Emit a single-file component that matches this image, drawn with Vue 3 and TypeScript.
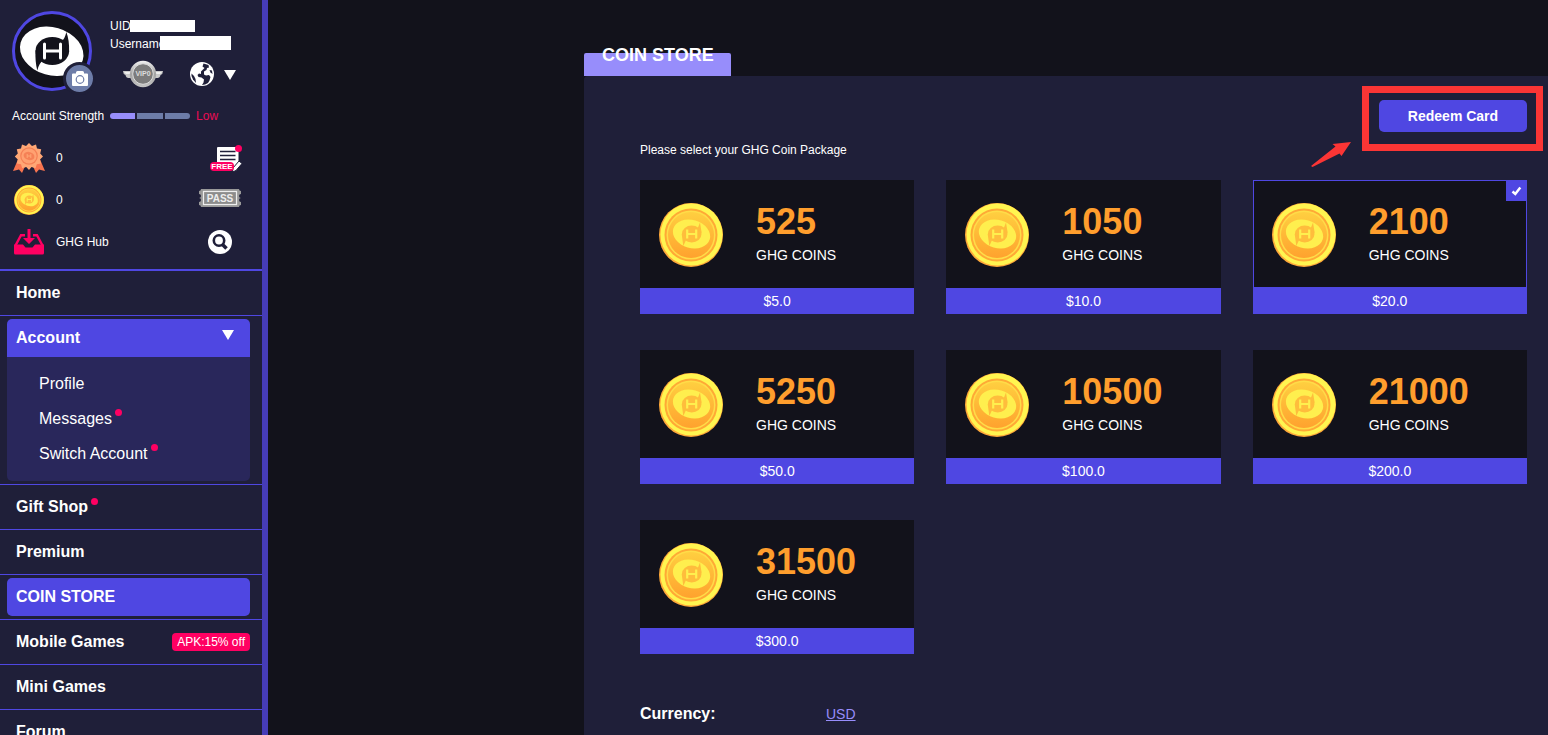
<script setup lang="ts">
import { ref } from 'vue'

interface Pack {
  coins: number
  price: string
}

interface NavItem {
  label: string
  dot?: boolean
  tag?: string
  children?: { label: string; dot?: boolean }[]
}

const packs: Pack[] = [
  { coins: 525, price: '$5.0' },
  { coins: 1050, price: '$10.0' },
  { coins: 2100, price: '$20.0' },
  { coins: 5250, price: '$50.0' },
  { coins: 10500, price: '$100.0' },
  { coins: 21000, price: '$200.0' },
  { coins: 31500, price: '$300.0' },
]

const nav: NavItem[] = [
  { label: 'Home' },
  {
    label: 'Account',
    children: [
      { label: 'Profile' },
      { label: 'Messages', dot: true },
      { label: 'Switch Account', dot: true },
    ],
  },
  { label: 'Gift Shop', dot: true },
  { label: 'Premium' },
  { label: 'COIN STORE' },
  { label: 'Mobile Games', tag: 'APK:15% off' },
  { label: 'Mini Games' },
  { label: 'Forum' },
]

const current = ref('COIN STORE')
const accountOpen = ref(true)
const selected = ref(2100)
</script>

<template>
  <div class="shell">
    <svg class="defs" width="0" height="0" aria-hidden="true">
      <defs>
        <linearGradient id="coin-face" x1="0" y1="0" x2="0" y2="1">
          <stop offset="0" stop-color="#ffcf40" />
          <stop offset="1" stop-color="#ffa22e" />
        </linearGradient>
        <linearGradient id="metal" x1="0" y1="0" x2="0" y2="1">
          <stop offset="0" stop-color="#f2f2f2" />
          <stop offset="0.5" stop-color="#a2a2a2" />
          <stop offset="1" stop-color="#c4c4c4" />
        </linearGradient>
        <symbol id="coin" viewBox="0 0 64 64">
          <circle cx="32" cy="32" r="32" fill="#ffa93a" />
          <circle cx="32.500" cy="31.500" r="31" fill="#fff550" />
          <circle cx="32" cy="32" r="26.500" fill="#ffa935" />
          <circle cx="32" cy="32" r="24.500" fill="#ffdc48" />
          <circle cx="32" cy="32" r="23" fill="url(#coin-face)" />
          <ellipse cx="32.500" cy="31" rx="19" ry="14" transform="rotate(16 32.500 31)" fill="#ffef4e" />
          <ellipse cx="32.700" cy="31" rx="9.800" ry="8.500" fill="#ffbd3c" />
          <path d="M41 19.500L42.700 30 38 27zM24.300 43L22.700 31 28 35z" fill="#ffbd3c" />
          <path d="M28.200 26.500v9M37.200 26.500v9M28.200 31h9" stroke="#ffef4e" stroke-width="2.200" fill="none" />
        </symbol>
      </defs>
    </svg>

    <aside class="sidebar">
      <header class="profile">
        <div class="avatar">
          <svg viewBox="0 0 80 80" width="80" height="80" role="img" aria-label="Avatar">
            <circle cx="40" cy="40" r="38.500" fill="#12121b" stroke="#4f47e2" stroke-width="3" />
            <ellipse cx="39.700" cy="40.300" rx="32.300" ry="24" transform="rotate(16 39.700 40.300)" fill="#fff" />
            <ellipse cx="40.300" cy="40" rx="16.800" ry="14" fill="#12121b" />
            <path d="M54.300 21Q57.500 29 57.100 41L49 31Q53 28 54.300 21zM25.300 59.500Q23 51 23.500 39L31.500 49Q27 52 25.300 59.500z" fill="#12121b" />
            <path d="M32.500 33v14M48.500 33v14M32.500 40h16" stroke="#fff" stroke-width="3" stroke-linecap="round" fill="none" />
          </svg>
          <button class="camera" type="button" aria-label="Change photo">
            <svg viewBox="0 0 16 15" width="16" height="15">
              <path d="M1 2.500h3V1.500Q4 0 5.500 0h5Q12 0 12 1.500v1h3q1 0 1 1V14q0 1-1 1H1q-1 0-1-1V3.500q0-1 1-1z" fill="#fff" />
              <circle cx="8" cy="8.500" r="3.800" fill="none" stroke="#6d7ca8" stroke-width="1.200" />
            </svg>
          </button>
        </div>
        <div class="who">
          <p class="line">UID:<span class="mask mask-uid"></span></p>
          <p class="line">Username:<span class="mask mask-name"></span></p>
          <div class="tools">
            <svg viewBox="0 0 40 28" width="40" height="28" role="img" aria-label="VIP0">
              <path d="M0 11h10v7H5.500Q3 18 2.500 15 0 14 0 11zM40 11H30v7h4.500q2.500 0 3-3 2.500-1 2.500-4z" fill="#c9c9c9" />
              <path d="M1 12h9v2H3zM39 12h-9v2h7z" fill="#eee" />
              <circle cx="20" cy="14" r="13.200" fill="url(#metal)" />
              <circle cx="20" cy="14" r="10.300" fill="#7c7c7c" stroke="#dcdcdc" stroke-width="1" />
              <text x="20" y="16" text-anchor="middle" class="vip-text">VIP0</text>
            </svg>
            <button class="language" type="button" aria-label="Language">
              <svg viewBox="0 0 24 24" width="24" height="24">
                <circle cx="12" cy="12" r="12" fill="#fff" />
                <path d="M13.500 1.500l5 1.500.5 2.500-2 .5-.5 2-2.500 1.500 0 3 2 1 3-.5 1.500 2-1 3.500-1.500 2.500-3 1.500-3 .5 1.500-2.500.5-3-2.500-2-3-.5-1-2 1.500-1.500 2 .5 0-2.500 2-2 1.500-1.500-2-1.500z" fill="#1f1f39" />
                <path d="M1.500 11.500L4 14l1.500 3 .5 4-3-3.500-1.500-3.500z" fill="#1f1f39" />
                <path d="M19.500 8l2.500.5.5 3.500-2-1.500z" fill="#1f1f39" />
              </svg>
              <svg class="arrow-down" viewBox="0 0 12 10" width="12" height="10"><path d="M0 0h12L6 10z" fill="#fff" /></svg>
            </button>
          </div>
        </div>
      </header>

      <div class="strength">
        <span>Account Strength</span>
        <span class="meter"><i class="on"></i><i></i><i></i></span>
        <span class="low">Low</span>
      </div>

      <ul class="stats">
        <li>
          <svg viewBox="0 0 32 30" width="32" height="30" aria-hidden="true">
            <path d="M6 14L0 28l6-1.500L9 30l5-11zM26 14l6 14-6-1.500-3 3.500-5-11z" fill="#f9744f" />
            <path d="M16 0l3 3 4-1.500 1 4 4.200.8-1 4.200 2.800 3-3 3 1 4-4.200.8-1.300 4-4-1.200-2.500 3-2.800-3-4 1.200-1.200-4-4.200-.8 1-4-3-3 3-3-1-4.200 4.200-.8 1-4 4 1.500z" fill="#ffa775" />
            <circle cx="16" cy="13" r="8.800" fill="#f58156" />
            <circle cx="16" cy="13" r="7.600" fill="#ffa171" />
            <ellipse cx="16" cy="13" rx="5.500" ry="4" transform="rotate(15 16 13)" fill="#f58156" />
            <path d="M14.200 11v4M17.800 11v4M14.200 13h3.600" stroke="#ffa775" stroke-width="1" />
          </svg>
          <span class="value">0</span>
          <button class="side-icon" type="button" aria-label="Free">
            <svg viewBox="0 0 44 30" width="44" height="30">
              <path d="M20 4h19q1.500 0 1.500 1.500V19L35 27H19V5q0-1 1-1z" fill="#fff" />
              <path d="M22 8.500h15.500M22 12.500h15.500M22 16.500h15.500" stroke="#1f1f39" stroke-width="1.400" />
              <path d="M34.500 29l.5-4 6-7 3 2.500-6 7z" fill="#fff" stroke="#1f1f39" stroke-width="1" />
              <rect x="12" y="19" width="24" height="9" rx="4" fill="#ff0062" />
              <text x="24" y="26.300" text-anchor="middle" class="free-text">FREE</text>
              <circle cx="40.500" cy="5.500" r="3.500" fill="#ff0062" />
            </svg>
          </button>
        </li>
        <li>
          <svg viewBox="0 0 32 30" width="32" height="30" aria-hidden="true"><use href="#coin" x="1" y="0" width="30" height="30" /></svg>
          <span class="value">0</span>
          <button class="side-icon" type="button" aria-label="Pass">
            <svg viewBox="0 0 44 22" width="44" height="22">
              <path d="M3 0h38q0 2 2 2v3q-2 0-2 2t2 2q-2 0-2 2t2 2v3q-2 0-2 2H3q0-2-2-2v-3q2 0 2-2T1 9q2 0 2-2T1 5V2q2 0 2-2z" fill="#999" />
              <rect x="5.500" y="2.500" width="33" height="13" fill="#8c8c8c" stroke="#eee" stroke-width="1.200" />
              <text x="22" y="12.700" text-anchor="middle" class="pass-text">PASS</text>
            </svg>
          </button>
        </li>
        <li>
          <svg viewBox="0 0 32 26" width="32" height="26" aria-hidden="true">
            <path d="M1 15.500h9l2.500 3h7l2.500-3h9V24q0 1.500-1.500 1.500h-27Q1 25.500 1 24z" fill="#ff0062" />
            <path d="M2.500 16.500L8 6.200h4M29.500 16.500L24 6.200h-4" fill="none" stroke="#ff0062" stroke-width="2.400" />
            <path d="M14.500 0h3v9h4.500l-6 6-6-6h4.500z" fill="#ff0062" />
          </svg>
          <a class="value" href="#hub">GHG Hub</a>
          <button class="side-icon" type="button" aria-label="Search">
            <svg viewBox="0 0 24 24" width="24" height="24">
              <circle cx="12" cy="12" r="12" fill="#fff" />
              <circle cx="11" cy="10.500" r="5.200" fill="none" stroke="#1f1f39" stroke-width="2.600" />
              <path d="M14.500 14.500l4 4" stroke="#1f1f39" stroke-width="3.600" />
            </svg>
          </button>
        </li>
      </ul>

      <nav class="nav" aria-label="Main">
        <div v-for="item in nav" :key="item.label" class="nav-row">
          <template v-if="item.children">
            <button
              class="nav-item active group"
              :class="{ open: accountOpen }"
              type="button"
              :aria-expanded="accountOpen"
              @click="accountOpen = !accountOpen"
            >
              {{ item.label }}
              <svg class="caret" viewBox="0 0 12 10" width="12" height="10"><path d="M0 0h12L6 10z" fill="#fff" /></svg>
            </button>
            <div v-if="accountOpen" class="submenu">
              <a v-for="sub in item.children" :key="sub.label" href="#account">
                {{ sub.label }}<i v-if="sub.dot" class="dot"></i>
              </a>
            </div>
          </template>
          <a
            v-else
            class="nav-item"
            :class="{ active: current === item.label }"
            href="#store"
            @click.prevent="current = item.label"
          >
            {{ item.label }}<i v-if="item.dot" class="dot"></i>
            <span v-if="item.tag" class="tag">{{ item.tag }}</span>
          </a>
        </div>
      </nav>
    </aside>

    <main class="main">
      <h1 class="tab"><span>COIN STORE</span></h1>
      <section class="panel">
        <div class="actions">
          <div class="redeem-wrap">
            <button class="redeem" type="button">Redeem Card</button>
            <span class="frame"></span>
            <svg class="arrow" viewBox="0 0 40 25" width="40" height="25" aria-hidden="true">
              <path d="M0 24L24.500 4.500 21.500 2 40 0 30.500 14 28.500 11.500 1.500 25z" fill="#fb3535" />
            </svg>
          </div>
        </div>
        <p id="pack-label" class="hint">Please select your GHG Coin Package</p>

        <div class="grid" role="radiogroup" aria-labelledby="pack-label">
          <label v-for="pack in packs" :key="pack.coins" class="card" :class="{ selected: selected === pack.coins }">
            <input v-model="selected" type="radio" name="pack" :value="pack.coins" />
            <span class="card-body">
              <svg class="coin" viewBox="0 0 64 64" width="64" height="64" aria-hidden="true"><use href="#coin" /></svg>
              <span class="amount">
                <b>{{ pack.coins }}</b>
                <span>GHG COINS</span>
              </span>
            </span>
            <span class="price">{{ pack.price }}</span>
            <span v-if="selected === pack.coins" class="check">
              <svg viewBox="0 0 11 10" width="11" height="10"><path d="M1.500 5.500L4.300 8 9.300 1.500" fill="none" stroke="#fff" stroke-width="2.500" /></svg>
            </span>
          </label>
        </div>

        <div class="currency">
          <h2>Currency:</h2>
          <a href="#currency">USD</a>
        </div>
      </section>
    </main>
  </div>
</template>

<style>
body {
  background: #12121b;
}
</style>

<style scoped>
* {
  box-sizing: border-box;
}

.shell {
  display: flex;
  height: 100vh;
  overflow: hidden;
  background: #12121b;
  color: #fff;
  font-family: 'Liberation Sans', Arial, sans-serif;
  font-size: 12px;
}

.defs {
  position: absolute;
}

svg {
  display: block;
  flex: none;
}

button {
  border: 0;
  padding: 0;
  background: none;
  color: inherit;
  font: inherit;
  cursor: pointer;
}

a {
  color: inherit;
  text-decoration: none;
}

h1,
h2,
p,
ul {
  margin: 0;
  padding: 0;
  list-style: none;
}

.sidebar {
  flex: none;
  width: 268px;
  overflow: hidden;
  background: #1f1f39;
  border-right: 6px solid #463cb8;
}

.profile {
  display: flex;
  gap: 18px;
  padding: 11px 12px 0;
}

.avatar {
  position: relative;
  flex: none;
  width: 80px;
  height: 80px;
}

.camera {
  position: absolute;
  right: -4px;
  bottom: -4px;
  display: flex;
  align-items: center;
  justify-content: center;
  width: 33px;
  height: 33px;
  border: 3px solid #1f1f39;
  border-radius: 50%;
  background: #6d7ca8;
}

.who {
  flex: 1;
  padding-top: 6px;
}

.line {
  position: relative;
  line-height: 18px;
}

.mask {
  position: absolute;
  background: #fff;
}

.mask-uid {
  left: 20px;
  top: 3px;
  width: 65px;
  height: 12px;
}

.mask-name {
  left: 50px;
  top: 1px;
  width: 71px;
  height: 14px;
}

.tools {
  display: flex;
  align-items: center;
  gap: 27px;
  margin-top: 7px;
  padding-left: 13px;
}

.language {
  display: flex;
  align-items: center;
  gap: 10px;
}

.arrow-down {
  margin-top: 2px;
}

.vip-text {
  fill: #ddd;
  font-size: 7px;
  font-weight: 700;
}

.free-text {
  fill: #fff;
  font-size: 8px;
  font-weight: 700;
}

.pass-text {
  fill: #eee;
  font-size: 10px;
  font-weight: 700;
}

.strength {
  display: flex;
  align-items: center;
  gap: 6px;
  margin-top: 17px;
  padding-left: 12px;
  line-height: 16px;
}

.meter {
  display: flex;
  gap: 2px;
  width: 80px;
  border-radius: 3px;
  overflow: hidden;
}

.meter i {
  flex: 1;
  height: 6px;
  background: #6d7ca8;
}

.meter .on {
  background: #978dfb;
}

.low {
  color: #ec0c55;
}

.stats {
  padding: 13px 20px 6px 13px;
  border-bottom: 2px solid #4f47e2;
}

.stats li {
  display: flex;
  align-items: center;
  height: 42px;
}

.value {
  flex: 1;
  margin-left: 11px;
}

.side-icon {
  display: flex;
  justify-content: center;
  width: 44px;
}

.nav-row {
  border-bottom: 1px solid #4f47e2;
  padding: 3px 12px 3px 7px;
}

.nav-item {
  display: flex;
  align-items: center;
  width: 100%;
  height: 38px;
  padding-left: 9px;
  border-radius: 5px;
  font-size: 16px;
  font-weight: 700;
}

.nav-item.active {
  background: #4f47e2;
}

.nav-item.open {
  border-radius: 5px 5px 0 0;
}

.group {
  justify-content: space-between;
  padding-right: 16px;
}

.caret {
  margin-bottom: 6px;
}

.submenu {
  padding: 9px 0 10px 32px;
  border-radius: 0 0 5px 5px;
  background: #29275b;
  font-size: 16px;
}

.submenu a {
  display: flex;
  align-items: center;
  height: 35px;
}

.dot {
  width: 7px;
  height: 7px;
  margin: 0 0 12px 3px;
  border-radius: 50%;
  background: #ff0062;
}

.tag {
  margin-left: auto;
  padding: 0 5px;
  border-radius: 4px;
  background: #ff0062;
  font-size: 12px;
  font-weight: 400;
  line-height: 18px;
}

.main {
  display: flex;
  flex: 1;
  flex-direction: column;
  min-width: 0;
  padding: 53px 0 0 316px;
}

.tab {
  align-self: flex-start;
  height: 23px;
  padding: 0 17px 0 18px;
  border-radius: 2px 2px 0 0;
  background: #978dfb;
  font-size: 18px;
  line-height: 4px;
}

.panel {
  flex: 1;
  padding: 24px 21px 0 56px;
  border-radius: 4px 0 0 0;
  background: #1f1f39;
}

.actions {
  display: flex;
  justify-content: flex-end;
}

.redeem-wrap {
  position: relative;
}

.redeem {
  display: block;
  width: 148px;
  height: 32px;
  border-radius: 5px;
  background: #4f47e2;
  font-size: 14px;
  font-weight: 700;
}

.frame {
  position: absolute;
  inset: -14px -16px -19px -17px;
  border: 7px solid #fb3535;
  pointer-events: none;
}

.arrow {
  position: absolute;
  left: -68px;
  top: 42px;
}

.hint {
  margin: 10px 0 22px;
  line-height: 16px;
}

.grid {
  display: grid;
  grid-template-columns: repeat(3, 1fr);
  gap: 36px 32px;
}

.card {
  position: relative;
  display: flex;
  flex-direction: column;
  background: #12121b;
  cursor: pointer;
}

.card input {
  position: absolute;
  margin: 0;
  opacity: 0;
}

.card-body {
  display: flex;
  align-items: center;
  gap: 33px;
  height: 108px;
  padding: 2px 0 0 19px;
}

.selected .card-body {
  box-shadow: inset 0 0 0 1px #4f47e2;
}

.amount {
  display: flex;
  flex-direction: column;
  gap: 2px;
  padding-bottom: 4px;
  font-size: 14px;
  line-height: 20px;
}

.amount b {
  color: #ff9e2d;
  font-size: 36px;
  line-height: 42px;
}

.price {
  background: #4f47e2;
  font-size: 14px;
  line-height: 26px;
  text-align: center;
}

.check {
  position: absolute;
  right: 0;
  top: 0;
  display: flex;
  align-items: center;
  justify-content: center;
  width: 21px;
  height: 21px;
  background: #4f47e2;
}

.currency {
  display: flex;
  align-items: center;
  margin-top: 48px;
  line-height: 24px;
}

.currency h2 {
  width: 186px;
  font-size: 16px;
}

.currency a {
  color: #978dfb;
  font-size: 14px;
  text-decoration: underline;
}
</style>
